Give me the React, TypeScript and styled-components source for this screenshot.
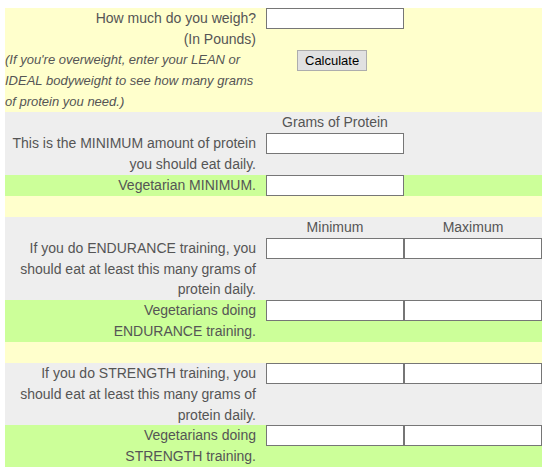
import React from "react";
import styled, { createGlobalStyle } from "styled-components";

const Global = createGlobalStyle`
  html, body { margin: 0; padding: 0; background: #ffffff; }
  body { font-family: "Liberation Sans", Arial, sans-serif; font-size: 14px; color: #555555; }
`;

const LINE = "20.86px";

const Page = styled.div`
  padding: 8px 5px;
  width: 537px;
`;

const Band = styled.div<{ $bg: string }>`
  display: grid;
  grid-template-columns: 261px 138px 138px;
  align-items: start;
  background: ${(p) => p.$bg};
  line-height: ${LINE};
`;

const Spacer = styled.div`
  height: ${LINE};
  background: #ffffcc;
`;

const Label = styled.div`
  grid-column: 1;
  text-align: right;
  padding-right: 10px;
  color: #555555;
`;

const Note = styled.div`
  grid-column: 1;
  grid-row: span 3;
  font-style: italic;
  font-size: 13px;
  text-align: left;
  white-space: nowrap;
  color: #555555;
`;

const ColHead = styled.div`
  text-align: center;
  color: #555555;
`;

const Blank = styled.div`
  min-height: ${LINE};
`;

const Field = styled.input`
  box-sizing: border-box;
  width: 138px;
  height: 21px;
  margin: 0;
  padding: 1px 3px;
  border: 1px solid #767676;
  background: #ffffff;
  font: inherit;
  outline: none;
`;

const ButtonCell = styled.div`
  grid-column: 2;
  padding-left: 31px;
`;

const CalcButton = styled.button`
  box-sizing: border-box;
  height: 21px;
  margin: 0;
  padding: 0 7px;
  border: 1px solid #adadad;
  background: #e1e1e1;
  color: #000000;
  font-family: "Liberation Sans", Arial, sans-serif;
  font-size: 13px;
  line-height: 19px;
  cursor: pointer;
`;

export default function App() {
  return (
    <>
      <Global />
      <Page>
        <Band $bg="#ffffcc">
          <Label>How much do you weigh?</Label>
          <Field type="text" />
          <Blank />
          <Label>(In Pounds)</Label>
          <Blank />
          <Blank />
          <Note>
            (If you're overweight, enter your LEAN or
            <br />
            IDEAL bodyweight to see how many grams
            <br />
            of protein you need.)
          </Note>
          <ButtonCell>
            <CalcButton type="button">Calculate</CalcButton>
          </ButtonCell>
        </Band>

        <Band $bg="#eeeeee">
          <Blank />
          <ColHead>Grams of Protein</ColHead>
          <Blank />
          <Label>
            This is the MINIMUM amount of protein
            <br />
            you should eat daily.
          </Label>
          <Field type="text" />
          <Blank />
        </Band>
        <Band $bg="#ccff99">
          <Label>Vegetarian MINIMUM.</Label>
          <Field type="text" />
          <Blank />
        </Band>

        <Spacer />

        <Band $bg="#eeeeee">
          <Blank />
          <ColHead>Minimum</ColHead>
          <ColHead>Maximum</ColHead>
          <Label>
            If you do ENDURANCE training, you
            <br />
            should eat at least this many grams of
            <br />
            protein daily.
          </Label>
          <Field type="text" />
          <Field type="text" />
        </Band>
        <Band $bg="#ccff99">
          <Label>
            Vegetarians doing
            <br />
            ENDURANCE training.
          </Label>
          <Field type="text" />
          <Field type="text" />
        </Band>

        <Spacer />

        <Band $bg="#eeeeee">
          <Label>
            If you do STRENGTH training, you
            <br />
            should eat at least this many grams of
            <br />
            protein daily.
          </Label>
          <Field type="text" />
          <Field type="text" />
        </Band>
        <Band $bg="#ccff99">
          <Label>
            Vegetarians doing
            <br />
            STRENGTH training.
          </Label>
          <Field type="text" />
          <Field type="text" />
        </Band>
      </Page>
    </>
  );
}
